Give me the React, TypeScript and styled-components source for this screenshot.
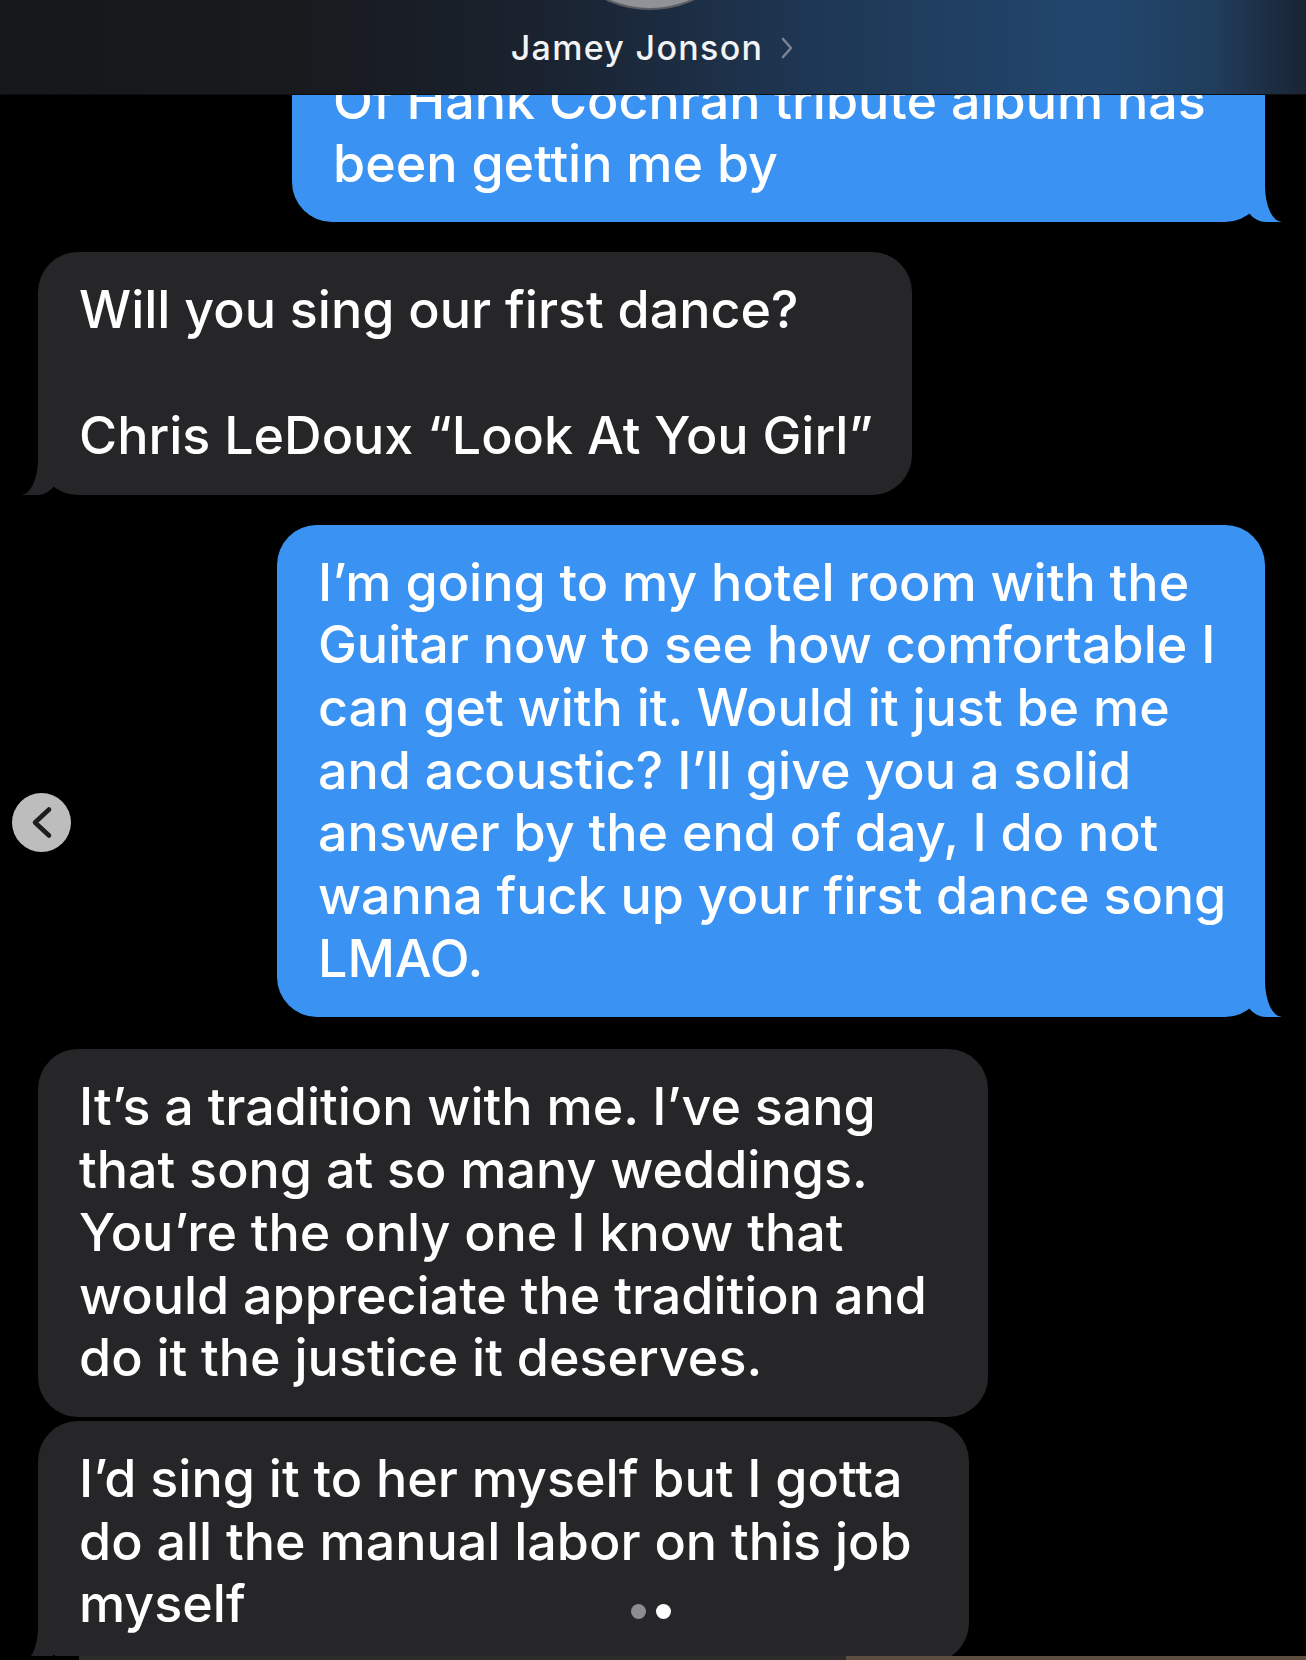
import React from "react";
import styled, { createGlobalStyle, css } from "styled-components";

const Global = createGlobalStyle`
  html, body {
    margin: 0;
    padding: 0;
    background: #000;
  }
  body {
    font-family: Inter, "Noto Sans", "Liberation Sans", sans-serif;
    -webkit-font-smoothing: antialiased;
  }
`;

const BLUE = "#3a93f3";
const GRAY = "#262628";

const Screen = styled.div`
  position: relative;
  width: 1306px;
  height: 1660px;
  overflow: hidden;
  background: #000;
`;

const Header = styled.header`
  position: absolute;
  top: 0;
  left: 0;
  right: 0;
  height: 94px;
  z-index: 5;
  display: flex;
  align-items: center;
  justify-content: center;
  gap: 16px;
  overflow: hidden;
  background: linear-gradient(
    90deg,
    #161718 0%,
    #181a1d 22%,
    #1a2330 42%,
    #1e3754 62%,
    #22476e 84%,
    #203d5c 93%,
    #1a2433 100%
  );
  border-bottom: 1px solid #0c0d0f;
`;

const Avatar = styled.div`
  position: absolute;
  left: 546px;
  top: -200px;
  width: 208px;
  height: 208px;
  border-radius: 50%;
  background: #8f9398;
  box-shadow: 0 0 0 2px #5a5e64;
`;

const Title = styled.span`
  color: #f2f3f5;
  font-size: 34px;
  font-weight: 500;
  letter-spacing: 1.3px;
  line-height: 1;
  margin-top: 2px;
`;

const TitleChevron = styled.svg`
  width: 16px;
  height: 24px;
  margin-top: 2px;
`;

const Thread = styled.main`
  display: flex;
  flex-direction: column;
  padding-top: 43px;
`;

const Row = styled.div<{ $side: "me" | "them"; $gap: number }>`
  display: flex;
  justify-content: ${(p) => (p.$side === "me" ? "flex-end" : "flex-start")};
  padding: 0 41px 0 38px;
  margin-top: ${(p) => p.$gap}px;
`;

const meTail = css`
  &::before {
    content: "";
    position: absolute;
    bottom: 0;
    right: -17px;
    width: 40px;
    height: 44px;
    background: ${BLUE};
    border-bottom-left-radius: 24px 30px;
  }
  &::after {
    content: "";
    position: absolute;
    bottom: 0;
    right: -60px;
    width: 60px;
    height: 48px;
    background: #000;
    border-bottom-left-radius: 17px 36px;
  }
`;

const themTail = css`
  &::before {
    content: "";
    position: absolute;
    bottom: 0;
    left: -17px;
    width: 40px;
    height: 44px;
    background: ${GRAY};
    border-bottom-right-radius: 24px 30px;
  }
  &::after {
    content: "";
    position: absolute;
    bottom: 0;
    left: -60px;
    width: 60px;
    height: 48px;
    background: #000;
    border-bottom-right-radius: 17px 36px;
  }
`;

const Bubble = styled.div<{ $side: "me" | "them"; $tail: boolean; $width: number }>`
  position: relative;
  box-sizing: border-box;
  width: ${(p) => p.$width}px;
  padding: 27px 30px 27px 41px;
  border-radius: 40px;
  background: ${(p) => (p.$side === "me" ? BLUE : GRAY)};
  color: #fff;
  font-size: 52px;
  font-weight: 500;
  line-height: 62.7px;
  white-space: nowrap;
  ${(p) => (p.$tail ? (p.$side === "me" ? meTail : themTail) : "")}
`;

const Line = styled.div``;

const BackButton = styled.button`
  position: absolute;
  left: 12px;
  top: 793px;
  width: 59px;
  height: 59px;
  padding: 0;
  border: none;
  border-radius: 50%;
  background: #bdbdbd;
  display: flex;
  align-items: center;
  justify-content: center;
  z-index: 4;
`;

const Dots = styled.div`
  position: absolute;
  left: 631px;
  top: 1604px;
  display: flex;
  gap: 10px;
  z-index: 4;
`;

const Dot = styled.span<{ $active: boolean }>`
  width: 15px;
  height: 15px;
  border-radius: 50%;
  background: ${(p) => (p.$active ? "#ffffff" : "#8c8c91")};
`;

const NextStrip = styled.div`
  position: absolute;
  left: 0;
  right: 0;
  bottom: 0;
  height: 4px;
  display: flex;
  z-index: 3;
`;

const StripPart = styled.div<{ $w: string; $c: string }>`
  flex: 0 0 ${(p) => p.$w};
  background: ${(p) => p.$c};
`;

type Msg = { side: "me" | "them"; tail: boolean; width: number; gap: number; lines: string[] };

const messages: Msg[] = [
  {
    side: "me",
    tail: true,
    width: 973,
    gap: 0,
    lines: ["Of Hank Cochran tribute album has", "been gettin me by"],
  },
  {
    side: "them",
    tail: true,
    width: 874,
    gap: 30,
    lines: ["Will you sing our first dance?", "\u00a0", "Chris LeDoux \u201cLook At You Girl\u201d"],
  },
  {
    side: "me",
    tail: true,
    width: 988,
    gap: 30,
    lines: [
      "I\u2019m going to my hotel room with the",
      "Guitar now to see how comfortable I",
      "can get with it. Would it just be me",
      "and acoustic? I\u2019ll give you a solid",
      "answer by the end of day, I do not",
      "wanna fuck up your first dance song",
      "LMAO.",
    ],
  },
  {
    side: "them",
    tail: false,
    width: 950,
    gap: 32,
    lines: [
      "It\u2019s a tradition with me. I\u2019ve sang",
      "that song at so many weddings.",
      "You\u2019re the only one I know that",
      "would appreciate the tradition and",
      "do it the justice it deserves.",
    ],
  },
  {
    side: "them",
    tail: true,
    width: 931,
    gap: 4,
    lines: [
      "I\u2019d sing it to her myself but I gotta",
      "do all the manual labor on this job",
      "myself",
    ],
  },
];

export default function App() {
  return (
    <Screen>
      <Global />
      <Thread>
        {messages.map((m, i) => (
          <Row key={i} $side={m.side} $gap={m.gap}>
            <Bubble $side={m.side} $tail={m.tail} $width={m.width}>
              {m.lines.map((l, j) => (
                <Line key={j}>{l}</Line>
              ))}
            </Bubble>
          </Row>
        ))}
      </Thread>

      <Header>
        <Avatar />
        <Title>Jamey Jonson</Title>
        <TitleChevron viewBox="0 0 16 24">
          <polyline
            points="4,3 12,12 4,21"
            fill="none"
            stroke="#7b8490"
            strokeWidth="2.6"
            strokeLinecap="round"
            strokeLinejoin="round"
          />
        </TitleChevron>
      </Header>

      <BackButton aria-label="Previous">
        <svg width="59" height="59" viewBox="0 0 59 59">
          <polyline
            points="37,16.5 23,29.5 37,42.5"
            fill="none"
            stroke="#1e1e1e"
            strokeWidth="4.6"
            strokeLinecap="round"
            strokeLinejoin="round"
          />
        </svg>
      </BackButton>

      <Dots>
        <Dot $active={false} />
        <Dot $active={true} />
      </Dots>

      <NextStrip>
        <StripPart $w="79px" $c="#000" />
        <StripPart $w="767px" $c="#2c2c2c" />
        <StripPart $w="460px" $c="#5d4e40" />
      </NextStrip>
    </Screen>
  );
}
